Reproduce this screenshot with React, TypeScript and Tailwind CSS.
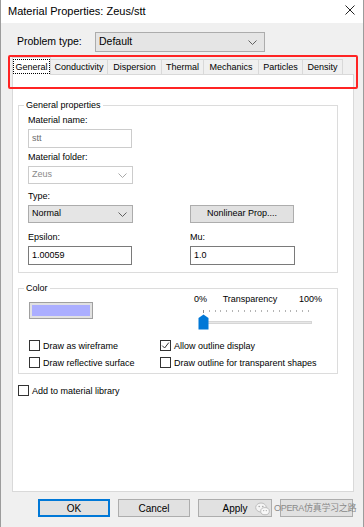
import React from "react";

const tabs = [
  { label: "General", w: "w-[39px]" },
  { label: "Conductivity", w: "w-[57px]" },
  { label: "Dispersion", w: "w-[54px]" },
  { label: "Thermal", w: "w-[42px]" },
  { label: "Mechanics", w: "w-[55px]" },
  { label: "Particles", w: "w-[44px]" },
  { label: "Density", w: "w-[40px]" },
];

const Chevron = ({ color = "#606060" }: { color?: string }) => (
  <svg width="9" height="5" viewBox="0 0 9 5">
    <path d="M0.5 0.5 L4.5 4.5 L8.5 0.5" fill="none" stroke={color} strokeWidth="1" />
  </svg>
);

const Checkbox = ({ label, checked = false }: { label: string; checked?: boolean }) => (
  <div className="flex h-[13px] items-center gap-[3px]">
    <span className="flex h-[11px] w-[11px] shrink-0 items-center justify-center border border-[#333333] bg-white">
      {checked && (
        <svg width="9" height="9" viewBox="0 0 9 9">
          <path d="M1.2 4.6 L3.6 7 L7.8 1.6" fill="none" stroke="#333333" strokeWidth="1" />
        </svg>
      )}
    </span>
    <span className="leading-[12px]">{label}</span>
  </div>
);

const Label = ({ children, className = "" }: { children: React.ReactNode; className?: string }) => (
  <div className={`h-[12px] leading-[12px] ${className}`}>{children}</div>
);

const Slider = () => (
  <div className="flex flex-col">
    {/* tick marks */}
    <div className="ml-[9px] mt-[5px] flex h-[3px] w-[106px] justify-between">
      {Array.from({ length: 19 }).map((_, i) => (
        <span key={i} className={`w-px ${i === 0 ? "h-[3px] bg-[#8a8a8a]" : "h-[2px] bg-[#b4b4b4]"}`} />
      ))}
    </div>
    <div className="relative mt-px h-[16px]">
      <div className="absolute left-[9px] top-[7px] h-[3px] w-[109px] border border-[#d6d6d6] bg-[#e7e7e7]" />
      <svg className="absolute left-[4px] top-0" width="11" height="16" viewBox="0 0 11 16">
        <path d="M5.5 0.5 L10.5 4 L10.5 15.5 L0.5 15.5 L0.5 4 Z" fill="#0078d7" />
      </svg>
    </div>
  </div>
);

const WeChatIcon = () => (
  <svg width="15" height="14" viewBox="0 0 15 14">
    <ellipse cx="6" cy="5.5" rx="5.3" ry="4.5" fill="#f4f4f4" stroke="#b8b8b8" strokeWidth="0.9" />
    <circle cx="4.2" cy="4.5" r="0.8" fill="#a8a8a8" />
    <circle cx="7.8" cy="4.5" r="0.8" fill="#a8a8a8" />
    <ellipse cx="10" cy="9.2" rx="4.3" ry="3.6" fill="#f8f8f8" stroke="#b8b8b8" strokeWidth="0.9" />
    <circle cx="8.7" cy="8.6" r="0.65" fill="#a8a8a8" />
    <circle cx="11.3" cy="8.6" r="0.65" fill="#a8a8a8" />
  </svg>
);

export default function App() {
  return (
    <div className="relative flex h-[527px] w-[364px] flex-col overflow-hidden border-x border-[#9c9c9c] bg-[#f0f0f0] font-['Liberation_Sans',Arial,sans-serif] text-[9px] text-black">
      {/* Title bar */}
      <div className="flex h-[23px] shrink-0 items-center justify-between bg-white pl-[7px] pr-[8px]">
        <span className="text-[11px]">Material Properties: Zeus/stt</span>
        <svg width="10" height="10" viewBox="0 0 10 10" className="-mt-[4px]">
          <path d="M0.5 0.5 L9.5 9.5 M9.5 0.5 L0.5 9.5" stroke="#222" strokeWidth="1" />
        </svg>
      </div>

      {/* Problem type */}
      <div className="mt-[9px] flex h-[20px] items-center pl-[16px]">
        <span className="w-[78px] text-[10.5px]">Problem type:</span>
        <div className="flex h-[20px] w-[170px] items-center justify-between border border-[#acacac] bg-[#e5e5e5] pl-[3px] pr-[7px] text-[10.5px]">
          <span>Default</span>
          <Chevron />
        </div>
      </div>

      {/* Tabs */}
      <div className="mt-[5px] flex h-[17px] items-end pl-[11px]">
        {tabs.map((t, i) =>
          i === 0 ? (
            <div
              key={t.label}
              className={`relative z-10 -mb-px flex h-[18px] ${t.w} items-start justify-center border-x border-t border-[#d9d9d9] bg-white pt-[1px]`}
            >
              <span className="flex h-[15px] w-[37px] items-center justify-center border border-dotted border-black leading-[12px]">
                {t.label}
              </span>
            </div>
          ) : (
            <div
              key={t.label}
              className={`flex h-[15px] ${t.w} items-center justify-center border-r border-t border-[#d9d9d9] bg-[#f0f0f0] leading-[12px]`}
            >
              {t.label}
            </div>
          )
        )}
      </div>

      {/* Tab page */}
      <div className="ml-[11px] flex h-[418px] w-[342px] flex-col border border-[#d9d9d9] bg-white pl-[5px]">
        {/* General properties */}
        <fieldset className="mt-[24px] w-[320px] border border-[#dcdcdc] pb-[7px] pl-[9px]">
          <legend className="-ml-[4px] px-[2px] leading-[12px]">General properties</legend>
          <Label className="mt-[3px]">Material name:</Label>
          <div className="mt-[3px] flex h-[19px] w-[104px] items-center border border-[#cccccc] bg-white pl-[3px] text-[#6d6d6d]">
            stt
          </div>
          <Label className="mt-[3px]">Material folder:</Label>
          <div className="mt-[3px] flex h-[18px] w-[105px] items-center justify-between border border-[#cccccc] bg-white pl-[3px] pr-[5px] text-[#8a8a8a]">
            <span>Zeus</span>
            <Chevron color="#a8a8a8" />
          </div>
          <Label className="mt-[6px]">Type:</Label>
          <div className="mt-[3px] flex h-[18px] items-center">
            <div className="flex h-[18px] w-[105px] items-center justify-between border border-[#acacac] bg-[#e5e5e5] pl-[3px] pr-[5px]">
              <span>Normal</span>
              <Chevron />
            </div>
            <div className="ml-[57px] flex h-[18px] w-[104px] items-center justify-center border border-[#adadad] bg-[#e1e1e1]">
              Nonlinear Prop....
            </div>
          </div>
          <div className="mt-[8px] flex">
            <div className="w-[162px]">
              <Label>Epsilon:</Label>
              <div className="mt-[3px] flex h-[19px] w-[104px] items-center border border-[#7a7a7a] bg-white pl-[3px]">
                1.00059
              </div>
            </div>
            <div>
              <Label>Mu:</Label>
              <div className="mt-[3px] flex h-[19px] w-[105px] items-center border border-[#7a7a7a] bg-white pl-[3px]">
                1.0
              </div>
            </div>
          </div>
        </fieldset>

        {/* Color */}
        <fieldset className="mt-[9px] w-[320px] border border-[#dcdcdc] pb-[4px] pl-[10px]">
          <legend className="-ml-[5px] px-[2px] leading-[12px]">Color</legend>
          <div className="flex">
            <div className="w-[165px] pt-[8px]">
              <div className="h-[17px] w-[64px] border border-[#a0a0a0] bg-[#e1e1e1] p-[2px]">
                <div className="h-full w-full bg-[#abaeff]" />
              </div>
            </div>
            <div className="w-[128px]">
              <div className="flex h-[11px] items-center justify-between leading-[11px]">
                <span>0%</span>
                <span className="-ml-[6px]">Transparency</span>
                <span>100%</span>
              </div>
              <Slider />
            </div>
          </div>
          <div className="mt-[9px] grid grid-cols-[131px_1fr] gap-y-[4px]">
            <Checkbox label="Draw as wireframe" />
            <Checkbox label="Allow outline display" checked />
            <Checkbox label="Draw reflective surface" />
            <Checkbox label="Draw outline for transparent shapes" />
          </div>
        </fieldset>

        <div className="mt-[10px]">
          <Checkbox label="Add to material library" />
        </div>
      </div>

      {/* Dialog buttons */}
      <div className="mt-[7px] flex gap-[8px] pl-[37px] text-[10px]">
        <div className="flex h-[18px] w-[72px] items-center justify-center border-2 border-[#0078d7] bg-[#e1e1e1]">OK</div>
        <div className="flex h-[18px] w-[72px] items-center justify-center border border-[#adadad] bg-[#e1e1e1]">Cancel</div>
        <div className="flex h-[18px] w-[74px] items-center justify-center border border-[#adadad] bg-[#e1e1e1]">Apply</div>
        <div className="h-[18px] w-[73px] border border-[#adadad] bg-[#e1e1e1]" />
      </div>

      {/* watermark */}
      <div className="absolute left-[254px] top-[502px] flex items-center gap-[4px] font-['Liberation_Sans','Noto_Sans_CJK_SC',sans-serif] text-[9px] text-[#8a8a8a]">
        <WeChatIcon />
        <span className="tracking-[-0.3px]">OPERA仿真学习之路</span>
      </div>

      {/* annotation highlight */}
      <div className="absolute left-[7px] top-[55px] h-[34px] w-[350px] rounded-[2px] border-[2.5px] border-[#ff2424]" />
    </div>
  );
}
